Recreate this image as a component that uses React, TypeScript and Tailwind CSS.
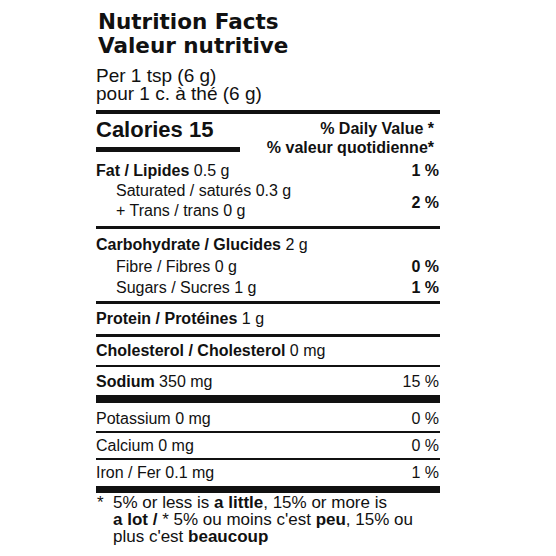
export default function App() {
  return (
    <div className="w-[556px] h-[556px] bg-white text-[#111] overflow-hidden font-['Liberation_Sans',Arial,sans-serif]">
      <div className="ml-[96px] w-[344px] pt-[10px]">
        <div className="pl-[2px] font-['DejaVu_Sans',sans-serif] font-bold text-[21.5px] leading-[24px] whitespace-nowrap">
          Nutrition Facts
          <br />
          Valeur nutritive
        </div>
        <div className="mt-[9px] text-[19px] leading-[18px] whitespace-nowrap">
          Per 1 tsp (6 g)
          <br />
          pour 1 c. à thé (6 g)
        </div>
        <div className="mt-[7px] h-[4px] bg-[#111]" />

        <div className="h-[47px] flex justify-between">
          <div className="pt-[4px] flex flex-col">
            <div className="text-[22px] leading-[24px] font-bold whitespace-nowrap">Calories 15</div>
            <div className="mt-[5px] h-[5px] w-[144px] bg-[#111]" />
          </div>
          <div className="pt-[5px] pr-[6px] text-right text-[16px] leading-[19px] font-bold whitespace-nowrap">
            % Daily Value *
            <br />
            % valeur quotidienne*
          </div>
        </div>

        <div className="h-[65px] text-[16px] leading-[20px]">
          <div className="flex justify-between pr-[1px]">
            <span className="whitespace-nowrap">
              <b>Fat / Lipides</b> 0.5 g
            </span>
            <b className="whitespace-nowrap">1 %</b>
          </div>
          <div className="flex justify-between items-center pr-[1px]">
            <div className="pl-[20px] whitespace-nowrap">
              Saturated / saturés 0.3 g
              <br />+ Trans / trans 0 g
            </div>
            <b className="whitespace-nowrap pt-[3px]">2 %</b>
          </div>
        </div>
        <div className="h-[3px] bg-[#111]" />

        <div className="h-[72px] pt-[5px] text-[16px] leading-[21.5px]">
          <div className="whitespace-nowrap">
            <b>Carbohydrate / Glucides</b> 2 g
          </div>
          <div className="flex justify-between pr-[1px]">
            <span className="pl-[20px] whitespace-nowrap">Fibre / Fibres 0 g</span>
            <b className="whitespace-nowrap">0 %</b>
          </div>
          <div className="flex justify-between pr-[1px]">
            <span className="pl-[20px] whitespace-nowrap">Sugars / Sucres 1 g</span>
            <b className="whitespace-nowrap">1 %</b>
          </div>
        </div>
        <div className="h-[3px] bg-[#111]" />

        <div className="h-[30px] pt-[5px] text-[16px] leading-[20px] whitespace-nowrap">
          <b>Protein / Protéines</b> 1 g
        </div>
        <div className="h-[3px] bg-[#111]" />

        <div className="h-[28px] pt-[4px] text-[16px] leading-[20px] whitespace-nowrap">
          <b>Cholesterol / Cholesterol</b> 0 mg
        </div>
        <div className="h-[2px] bg-[#111]" />

        <div className="h-[28px] pt-[5px] text-[16px] leading-[20px] flex justify-between pr-[1px]">
          <span className="whitespace-nowrap">
            <b>Sodium</b> 350 mg
          </span>
          <span className="whitespace-nowrap">15 %</span>
        </div>
        <div className="h-[8px] bg-[#111]" />

        <div className="h-[28px] pt-[6px] text-[16px] leading-[20px] flex justify-between pr-[1px]">
          <span className="whitespace-nowrap">Potassium 0 mg</span>
          <span className="whitespace-nowrap">0 %</span>
        </div>
        <div className="h-[2px] bg-[#111]" />

        <div className="h-[25px] pt-[3px] text-[16px] leading-[20px] flex justify-between pr-[1px]">
          <span className="whitespace-nowrap">Calcium 0 mg</span>
          <span className="whitespace-nowrap">0 %</span>
        </div>
        <div className="h-[2px] bg-[#111]" />

        <div className="h-[26px] pt-[3px] text-[16px] leading-[20px] flex justify-between pr-[1px]">
          <span className="whitespace-nowrap">Iron / Fer 0.1 mg</span>
          <span className="whitespace-nowrap">1 %</span>
        </div>
        <div className="h-[7px] bg-[#111]" />

        <div className="pt-[1px] flex text-[17px] leading-[17px]">
          <span className="w-[17px] shrink-0 pl-[1px]">*</span>
          <div className="whitespace-nowrap">
            5% or less is <b>a little</b>, 15% or more is
            <br />
            <b>a lot /</b> * 5% ou moins c'est <b>peu</b>, 15% ou
            <br />
            plus c'est <b>beaucoup</b>
          </div>
        </div>
      </div>
    </div>
  );
}
